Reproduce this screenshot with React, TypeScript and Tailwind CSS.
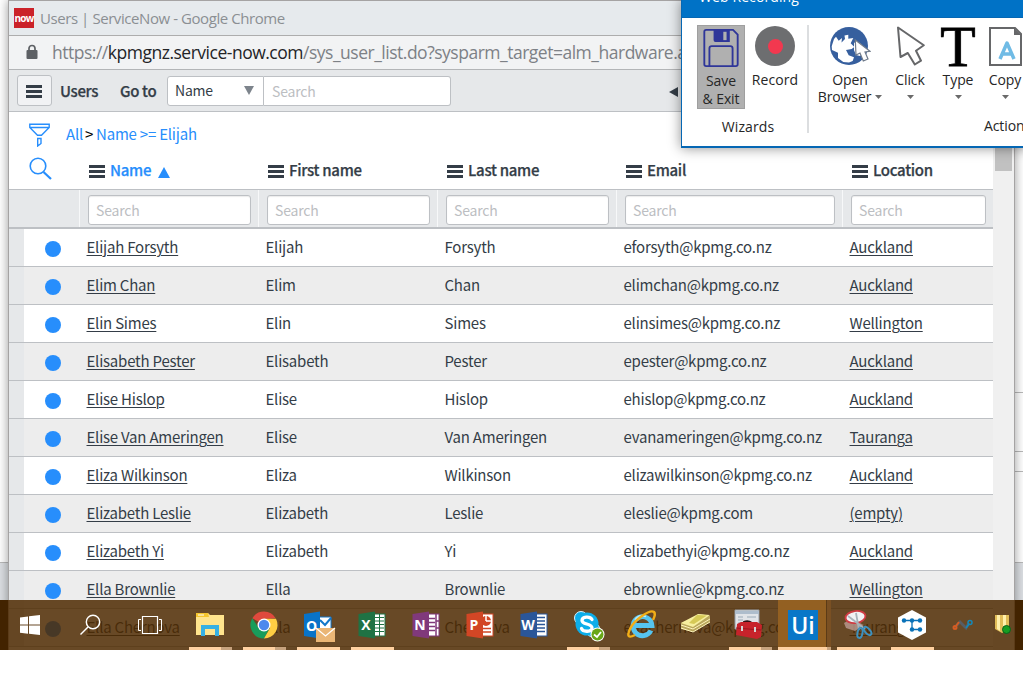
import React from "react";

const users = [
  ["Elijah Forsyth", "Elijah", "Forsyth", "eforsyth@kpmg.co.nz", "Auckland"],
  ["Elim Chan", "Elim", "Chan", "elimchan@kpmg.co.nz", "Auckland"],
  ["Elin Simes", "Elin", "Simes", "elinsimes@kpmg.co.nz", "Wellington"],
  ["Elisabeth Pester", "Elisabeth", "Pester", "epester@kpmg.co.nz", "Auckland"],
  ["Elise Hislop", "Elise", "Hislop", "ehislop@kpmg.co.nz", "Auckland"],
  ["Elise Van Ameringen", "Elise", "Van Ameringen", "evanameringen@kpmg.co.nz", "Tauranga"],
  ["Eliza Wilkinson", "Eliza", "Wilkinson", "elizawilkinson@kpmg.co.nz", "Auckland"],
  ["Elizabeth Leslie", "Elizabeth", "Leslie", "eleslie@kpmg.com", "(empty)"],
  ["Elizabeth Yi", "Elizabeth", "Yi", "elizabethyi@kpmg.co.nz", "Auckland"],
  ["Ella Brownlie", "Ella", "Brownlie", "ebrownlie@kpmg.co.nz", "Wellington"],
  ["Ella Chernova", "Ella", "Chernova", "ellachernova@kpmg.co.nz", "Tauranga"],
];

const columns = ["Name", "First name", "Last name", "Email", "Location"];
const gridCols = "grid grid-cols-[70px_179px_179px_179px_226px_151px]";
const sourceFont = "font-['Noto_Sans_CJK_SC',sans-serif]";
const segoeFont = "font-['Open_Sans',sans-serif]";
const strong = "font-medium [-webkit-text-stroke:0.25px_currentColor]";

function Bars() {
  return (
    <span className="flex w-4 shrink-0 flex-col gap-[2px]">
      <span className="h-[3px] bg-[#343d47]" />
      <span className="h-[3px] bg-[#343d47]" />
      <span className="h-[3px] bg-[#343d47]" />
    </span>
  );
}

function SearchBox() {
  return (
    <div className="h-[30px] rounded-[3px] border border-[#bdc0c4] bg-white pl-[7px] text-[14px] leading-[29px] tracking-[-0.2px] text-[#bcbec2] shadow-[inset_0_1px_1px_rgba(0,0,0,0.08)]">
      Search
    </div>
  );
}

function BrowserWindow() {
  return (
    <div className={`absolute left-2 top-0 flex h-[650px] w-[1007px] flex-col border-x border-t border-[#a5a3a3] bg-white shadow-[0_0_10px_rgba(0,0,0,0.4)] ${sourceFont}`}>
      <div className={`flex h-[35px] shrink-0 items-center border-b border-[#adadad] bg-[#e6eaed] pl-[5px] ${segoeFont}`}>
        <span className="flex h-5 w-5 items-center justify-center bg-[#cb2229] text-[10px] leading-none font-bold tracking-[-0.7px] text-white">now</span>
        <span className="ml-[6px] text-[15px] tracking-[-0.43px] text-[#8b8f93] whitespace-nowrap">Users | ServiceNow - Google Chrome</span>
      </div>
      <div className={`flex h-[34px] shrink-0 items-center overflow-hidden border-b border-[#b3b5b7] bg-[#f2f3f4] pl-[17px] ${segoeFont}`}>
        <svg width="12" height="16" viewBox="0 0 12 16" className="mb-[2px] shrink-0">
          <rect x="0.5" y="6" width="11" height="9" rx="1" fill="#5d6064" />
          <path d="M3 7V4.5a3 3 0 0 1 6 0V7" fill="none" stroke="#5d6064" strokeWidth="1.7" />
        </svg>
        <span className="ml-[14px] text-[17.5px] tracking-[-0.49px] text-[#7d8186] whitespace-nowrap">
          https://<span className="text-[#232427]">kpmgnz.service-now.com</span>/sys_user_list.do?sysparm_target=alm_hardware.a
        </span>
      </div>
      <div className="flex h-[42px] shrink-0 items-center border-b border-[#bdc0c4] bg-[#e6e8ea] pl-2 text-[#343d47]">
        <span className="flex h-[31px] w-[35px] items-center justify-center rounded-[3px] border border-[#bdc0c4] bg-[#f1f2f4] pt-[2px] pr-[2px]">
          <Bars />
        </span>
        <span className={`ml-2 w-[60px] text-[15px] leading-5 tracking-[-0.35px] ${strong}`}>Users</span>
        <span className={`w-[47px] text-[15px] leading-5 tracking-[-0.35px] whitespace-nowrap ${strong}`}>Go to</span>
        <span className="flex h-[30px] w-[97px] items-center justify-between rounded-l-[3px] border border-[#bdc0c4] bg-white pr-[9px] pl-[7px] text-[14px] tracking-[-0.2px]">
          Name
          <svg width="10" height="9" viewBox="0 0 10 9"><path d="M0 0H10L5 9z" fill="#7d848c" /></svg>
        </span>
        <span className="h-[30px] w-[187px] rounded-r-[3px] border border-l-0 border-[#bdc0c4] bg-white pl-2 text-[14px] leading-[28px] tracking-[-0.2px] text-[#bcbec2]">Search</span>
        <svg width="9" height="10" viewBox="0 0 9 10" className="mt-[2px] ml-[218px]"><path d="M9 0V10L0 5z" fill="#343d47" /></svg>
      </div>
      <div className="flex min-h-0 flex-1">
        <div className="w-[984px] shrink-0 overflow-hidden">
          <div className="flex h-[45px] items-center pl-5 text-[15px] tracking-[-0.22px] text-[#278efc]">
            <svg width="22" height="24" viewBox="0 0 22 24" fill="none" stroke="#278efc" strokeWidth="1.4">
              <path d="M.8 1.2H20.2V4.5L12.5 12.3H8.5L.8 4.5zM.8 4.5H20.2M8.7 15.5H12V20.5L8.7 23z" />
            </svg>
            <span className="mb-[2px] ml-[15px] leading-6 whitespace-nowrap">All<span className="mr-[3px] ml-[2px] text-black">&gt;</span>Name &gt;= Elijah</span>
          </div>
          <div className={`h-[33px] border-b border-[#bdc0c4] text-[15px] tracking-[-0.3px] ${gridCols}`}>
            <div className="pl-5">
              <svg width="24" height="24" viewBox="0 0 24 24" fill="none" stroke="#278efc">
                <circle cx="9" cy="9" r="7.8" strokeWidth="1.6" />
                <path d="M14.5 15L22 22" strokeWidth="2.2" />
              </svg>
            </div>
            {columns.map((name, i) => (
              <div key={name} className={`flex h-7 items-center gap-[5px] pl-[10px] whitespace-nowrap text-[#343d47] ${strong}`}>
                <Bars />
                <span className={i === 0 ? "mb-[2px] leading-6 text-[#278efc]" : "mb-[2px] leading-6"}>{name}</span>
                {i === 0 && <svg width="12" height="11" viewBox="0 0 12 11" className="mt-[2px] ml-[2px]"><path d="M0 11L6 0L12 11z" fill="#278efc" /></svg>}
              </div>
            ))}
          </div>
          <div className={`h-[39px] border-b-2 border-[#bdc0c4] bg-[#e6e8ea] ${gridCols}`}>
            <div />
            {columns.map((name) => (
              <div key={name} className="border-l border-[#f7f8f9] pt-[5px] pr-[7px] pl-2">
                <SearchBox />
              </div>
            ))}
          </div>
          {users.map((user, row) => (
            <div key={user[0]} className={`h-[38px] border-b border-[#bdc0c4] text-[15px] leading-[36px] tracking-[-0.22px] whitespace-nowrap text-[#343d47] ${row % 2 ? "bg-[#ededed]" : "bg-white"} ${gridCols}`}>
              <div className="flex items-center">
                <span className="h-full w-[15px] bg-[#e6e8ea]" />
                <span className="mt-[3px] ml-[21px] h-4 w-4 rounded-full bg-[#278efc]" />
              </div>
              {user.map((value, i) => (
                <div key={i} className="pl-[7.5px]">
                  <span className={i === 0 || i === 4 ? "underline decoration-1 underline-offset-2" : ""}>{value}</span>
                </div>
              ))}
            </div>
          ))}
        </div>
        <div className="flex-1 bg-[#f0f0f0] px-[2px]">
          <div className="h-[59px] bg-[#c1c1c1]" />
        </div>
      </div>
    </div>
  );
}

function Caret() {
  return <svg width="7" height="4" viewBox="0 0 7 4" className="shrink-0"><path d="M0 0H7L3.5 4z" fill="#6a6a6a" /></svg>;
}

function Tool({ label, width, children }: { label: string; width: string; children: React.ReactNode }) {
  return (
    <div className={`flex shrink-0 flex-col items-center ${width}`}>
      {children}
      <span className="mt-[2px] leading-[17px]">{label}</span>
      <span className="flex h-[17px] items-center"><Caret /></span>
    </div>
  );
}

function RecordingRibbon() {
  return (
    <div className={`absolute top-0 left-[681px] h-[148px] w-[350px] overflow-hidden border-b-2 border-l border-[#0567b4] bg-white text-[14px] tracking-[-0.1px] whitespace-nowrap text-[#262626] shadow-[0_0_12px_rgba(0,0,0,0.45)] ${segoeFont}`}>
      <div className="flex h-[18px] border-b border-[#0567b4] bg-[#0072c6] pl-[17px] text-white">
        <span className="-mt-[13px] block h-5 leading-5 tracking-[0.1px]">Web Recording</span>
      </div>
      <div className="flex h-[115px] pt-[7px] pl-[15px]">
        <div className="flex w-[110px] shrink-0 flex-col">
          <div className="flex">
            <div className="flex h-[84px] w-12 flex-col items-center border border-[#9f9f9f] bg-[#b0b0b0] pt-[3px]">
              <svg width="38" height="41" viewBox="0 0 38 41" fill="none" stroke="#2f3699" strokeWidth="2">
                <path d="M3 1H32L37 6V38Q37 40 35 40H3Q1 40 1 38V3Q1 1 3 1z" />
                <path d="M6.5 40V21Q6.500 18.500 9 18.500H29Q31.500 18.500 31.500 21V40" />
                <path d="M11 1H28.500V14H13Q11 14 11 12z" fill="#2f3699" stroke="none" />
                <path d="M21.500 3H25V12H21.500z" fill="#b0b0b0" stroke="none" />
              </svg>
              <span className="mt-[5px] leading-[18px]">Save</span>
              <span className="leading-[18px]">&amp; Exit</span>
            </div>
            <div className="flex w-[60px] flex-col items-center pt-[1px]">
              <span className="flex h-10 w-10 items-center justify-center rounded-full bg-[#6d6e70]"><span className="h-[15px] w-[15px] rounded-full bg-[#f2384f]" /></span>
              <span className="mt-[5px] leading-[18px] tracking-[0.1px]">Record</span>
            </div>
          </div>
          <span className="mt-[9px] w-[102px] text-center leading-[18px] tracking-[0.1px]">Wizards</span>
        </div>
        <div className="h-[108px] w-[2px] shrink-0 bg-[#dcdee0]" />
        <div className="ml-2 flex w-[250px] shrink-0 flex-col">
          <div className="flex h-[84px]">
            <div className="flex w-[66px] shrink-0 flex-col items-center">
              <svg width="42" height="44" viewBox="0 0 42 44">
                <circle cx="20" cy="21" r="19" fill="#365f9e" />
                <path d="M2.700 21.300L5 14L7 11.700L9.700 15.700L13 13L12.500 17.500L16 14L15.500 10.500L19.300 9.700V13.700L24.300 13L21.700 18.300L25.300 22L22.700 24L17 25L19.700 30.300L25 32.300L23.700 36L20 37.500L14.300 37L9 33V27.700L3 25z" fill="#fff" />
                <path d="M25 18L28 16L33 20L34 28L31 31L27 30L25 25z" fill="#fff" />
                <path d="M26.300 15L27 30L31 28L34.300 36L39 34L36 27L41 26.300z" fill="#fff" stroke="#707b8a" strokeWidth="1.2" />
              </svg>
              <span className="mt-[2px] leading-[17px]">Open</span>
              <span className="flex items-center gap-1 leading-[17px]">Browser <Caret /></span>
            </div>
            <Tool label="Click" width="w-[54px]">
              <svg width="30" height="44" viewBox="0 0 30 44" fill="#fff" stroke="#666769" strokeWidth="2" strokeLinejoin="round">
                <path d="M3 2.500L5.500 32L12.800 28L19.800 39.500L26 35.700L21 25.700L28.800 20.300z" />
              </svg>
            </Tool>
            <Tool label="Type" width="w-[42px]">
              <svg width="38" height="44" viewBox="0 0 38 44">
                <text x="19" y="41" textAnchor="middle" fontFamily="Liberation Serif" fontSize="58" stroke="#000" strokeWidth="0.8">T</text>
              </svg>
            </Tool>
            <Tool label="Copy" width="w-[52px]">
              <svg width="34" height="44" viewBox="0 0 34 44">
                <path d="M2 3H27L33 9V40H2z" fill="#fff" stroke="#666769" strokeWidth="2" />
                <path d="M26 3V10H33z" fill="#666769" />
                <path d="M12 34L19 18L26 34M14.500 29H23.500" fill="none" stroke="#70bbe5" strokeWidth="3.500" strokeLinejoin="round" />
              </svg>
            </Tool>
          </div>
          <span className="mt-[9px] ml-[167px] shrink-0 pt-[3px] leading-[18px]">Actions</span>
        </div>
      </div>
    </div>
  );
}

function OfficeIcon({ letter, dark, children }: { letter: string; dark: string; children: React.ReactNode }) {
  return (
    <svg width="54" height="50" viewBox="0 0 54 50">
      <rect x="26" y="14" width="14" height="22" fill="#fff" stroke={dark} />
      {children}
      <path d="M13.500 14L30 11.500V38.500L13.500 36z" fill={dark} />
      <text x="21" y="30" textAnchor="middle" fontFamily="Open Sans" fontWeight="700" fontSize="14" fill="#fff">{letter}</text>
    </svg>
  );
}

function Slot({ state = "none", children }: { state?: "none" | "open" | "multi" | "active"; children: React.ReactNode }) {
  return (
    <div className={`flex h-[50px] w-[54px] shrink-0 flex-col ${state === "active" ? "bg-[linear-gradient(90deg,transparent_1px,#936022_1px,#936022_49px,#5c3b16_49px,#5c3b16_50px,#7a5023_50px)]" : ""}`}>
      <div className="h-[47px] overflow-hidden">{children}</div>
      <div className={`flex ${state === "active" ? "pl-[1px]" : "pl-[6px]"}`}>
        {state === "open" && <span className="h-[3px] w-[43px] bg-[#ffd1a1]" />}
        {state === "active" && <><span className="h-[3px] w-[49px] bg-[#ffd1a1]" /><span className="h-[3px] w-1 bg-[#c7a37e]" /></>}
        {state === "multi" && <><span className="h-[3px] w-8 bg-[#ffd1a1]" /><span className="h-[3px] w-[11px] bg-[#c7a37e]" /></>}
      </div>
    </div>
  );
}

function Taskbar() {
  return (
    <div className="absolute top-[600px] left-0 flex h-[50px] w-[1023px] overflow-hidden bg-[rgba(78,41,0,0.85)]">
      <svg width="60" height="50" viewBox="0 0 60 50" className="shrink-0">
        <path d="M20 17.500L28 16.400V24.500H20zM29 16.200L40 15V24.500H29zM20 25.500H28V33.700L20 32.700zM29 25.500H40V35L29 33.800z" fill="#fff" />
      </svg>
      <svg width="60" height="50" viewBox="0 0 60 50" fill="none" stroke="#fff" strokeWidth="1.400" className="shrink-0">
        <circle cx="33" cy="22" r="6.700" /><path d="M28 27L20.500 34.500" />
      </svg>
      <svg width="63" height="50" viewBox="0 0 63 50" fill="none" stroke="#fff" className="shrink-0">
        <path d="M22.500 16.500H37.500V33.500H22.500z" strokeWidth="1.200" /><path d="M21 19.500H18.500V30.500H21M39 19.500H41.500V30.500H39" />
      </svg>
      <Slot state="multi">
        <svg width="54" height="50" viewBox="0 0 54 50">
          <path d="M13 13H25L27 15H41V35H13z" fill="#ffe48d" />
          <path d="M13 13H25L26 17H13z" fill="#f6c52d" /><path d="M15 15H21" stroke="#fff" />
          <path d="M18 36V25H36V36H32V29H22V36z" fill="#36b0e4" />
        </svg>
      </Slot>
      <Slot state="multi">
        <svg width="54" height="50" viewBox="0 0 54 50">
          <path d="M27 25L15.300 18.200A13.500 13.500 0 0 1 38.700 18.200L27 19z" fill="#df493d" />
          <path d="M15.300 18.200A13.500 13.500 0 0 0 27 38.500L32.500 28.500L27 25L21 27z" fill="#199c5b" />
          <path d="M27 18.700H39A13.500 13.500 0 0 1 27 38.500L33 28z" fill="#ffce43" />
          <circle cx="27" cy="25" r="6.500" fill="#fff" /><circle cx="27" cy="25" r="5.200" fill="#4c89ed" />
        </svg>
      </Slot>
      <Slot state="open">
        <svg width="54" height="50" viewBox="0 0 54 50">
          <path d="M28 17H40V33H28z" fill="#fff" stroke="#1277c9" /><path d="M29 20L34 25L40 18" fill="none" stroke="#1277c9" strokeWidth="2" />
          <path d="M13 14L29 11.500V38.500L13 36z" fill="#0873c8" />
          <text x="20.500" y="30.500" textAnchor="middle" fontFamily="Open Sans" fontWeight="700" fontSize="14" fill="#fff">O</text>
          <path d="M25 28H44V42H25z" fill="#eab676" /><path d="M25 28L34.500 36L44 28" fill="none" stroke="#fff" strokeWidth="1.200" />
        </svg>
      </Slot>
      <Slot state="open">
        <OfficeIcon letter="X" dark="#1f7244"><path d="M30 17.500H39M30 21H39M30 24.500H39M30 28H39M30 31.500H39M34.500 14V36" stroke="#1f7244" /></OfficeIcon>
      </Slot>
      <Slot>
        <OfficeIcon letter="N" dark="#80397b"><path d="M29 18.500H36M29 22.500H36M29 26.500H36M29 30.500H36M37 14V36M37 21H40M37 28H40" stroke="#80397b" strokeWidth="1.500" /></OfficeIcon>
      </Slot>
      <Slot>
        <OfficeIcon letter="P" dark="#d24625"><circle cx="33" cy="21" r="5" fill="#d24625" /><path d="M33 21V15M33 21H39" stroke="#fff" strokeWidth="1.500" /><path d="M30 28.500H38M30 32H38" stroke="#d24625" strokeWidth="1.500" /></OfficeIcon>
      </Slot>
      <Slot>
        <OfficeIcon letter="W" dark="#2a5699"><path d="M30 17.500H38M30 21H38M30 24.500H38M30 28H38M30 31.500H38" stroke="#2a5699" strokeWidth="1.400" /></OfficeIcon>
      </Slot>
      <Slot state="multi">
        <svg width="54" height="50" viewBox="0 0 54 50">
          <g fill="#0caeea" stroke="#d9f3ff" strokeWidth="1"><circle cx="20" cy="18" r="6.500" /><circle cx="32" cy="30" r="7" /></g>
          <circle cx="26" cy="24" r="11.500" fill="#0caeea" />
          <path d="M31 19.500C29 16 21 16.500 21 20.500C21 25 31 23 31 28C31 32 22 32.500 20.500 28.500" fill="none" stroke="#fff" strokeWidth="3.300" strokeLinecap="round" />
          <circle cx="36.500" cy="34.500" r="7" fill="#fff" /><circle cx="36.500" cy="34.500" r="6" fill="#68a617" />
          <path d="M33 34.500L36 37L40 32" fill="none" stroke="#fff" strokeWidth="1.800" />
        </svg>
      </Slot>
      <Slot>
        <svg width="54" height="50" viewBox="0 0 54 50">
          <path d="M36 30.500A9.500 9.500 0 1 1 37 25.500H20" fill="none" stroke="#56c4ef" strokeWidth="4.800" />
          <path d="M20 20Q24 14 31 16.500" fill="none" stroke="#b2ebff" strokeWidth="1.800" />
          <path d="M20 35Q10 40 15 29C19 20 35 9 39 12Q41 14 38 20" fill="none" stroke="#f2ae18" strokeWidth="2.500" />
        </svg>
      </Slot>
      <Slot>
        <svg width="54" height="50" viewBox="0 0 54 50">
          <path d="M12 23L31 14L41 16V22L24 32L12 29z" fill="#b9a75c" />
          <path d="M12 23L29 14L41 15L24 27z" fill="#f7ef9f" /><path d="M12 25L24 29L41 19M12 28L24 32L41 22" fill="none" stroke="#fff4bd" />
          <path d="M20 23L28 15L38 15.500L25 24z" fill="#d6c956" />
        </svg>
      </Slot>
      <Slot state="multi">
        <svg width="54" height="50" viewBox="0 0 54 50">
          <path d="M12 10H36V29H12z" fill="#e1e4e8" stroke="#929ba4" /><path d="M12 11H36V14H12z" fill="#aebdcc" /><path d="M15 17H20M15 20H20M15 23H20M24 17H33" stroke="#9aaab7" />
          <path d="M21 25V22Q25 20 29 23V26" fill="none" stroke="#301618" strokeWidth="2" />
          <path d="M14 24L18 22H34L39 25L38 37L34 39L13 35z" fill="#c7232b" /><path d="M13 28L38 30" stroke="#9b1820" /><path d="M19 26V31M32 27V32" stroke="#d5d5d5" strokeWidth="2" />
        </svg>
      </Slot>
      <Slot state="active">
        <svg width="54" height="50" viewBox="0 0 54 50">
          <rect x="11" y="10" width="30" height="30" fill="#0877c8" />
          <text x="26" y="34" textAnchor="middle" fontFamily="Open Sans" fontWeight="600" fontSize="23" fill="#fff">Ui</text>
        </svg>
      </Slot>
      <Slot state="open">
        <svg width="54" height="50" viewBox="0 0 54 50">
          <path d="M13 23L20 19L33 25L24 31L15 28z" fill="#c1a19b" opacity="0.75" />
          <ellipse cx="24.500" cy="17" rx="10" ry="6" fill="#f2f2f4" stroke="#cf3b43" strokeWidth="1.800" transform="rotate(-8 24.500 17)" />
          <path d="M17 16L34 29M25 13L28 30" stroke="#a9b3ba" strokeWidth="1.800" />
          <g fill="none" stroke="#3d91be" strokeWidth="2"><ellipse cx="29" cy="33" rx="2.500" ry="5" transform="rotate(12 29 33)" /><ellipse cx="36.500" cy="31" rx="2.500" ry="5" transform="rotate(-42 36.500 31)" /></g>
        </svg>
      </Slot>
      <Slot state="open">
        <svg width="54" height="50" viewBox="0 0 54 50">
          <path d="M27 10L41 17.500V32.500L27 40L13 32.500V17.500z" fill="#fff" />
          <path d="M19 20.500H35M27 20.500V29.500H35" fill="none" stroke="#0871b8" strokeWidth="1.300" />
          <g fill="#0871b8"><circle cx="19" cy="20.500" r="2.200" /><circle cx="27" cy="20.500" r="2.200" /><circle cx="35" cy="20.500" r="2.200" /><circle cx="27" cy="29.500" r="2.200" /><circle cx="35" cy="29.500" r="2.200" /></g>
        </svg>
      </Slot>
      <Slot>
        <svg width="54" height="50" viewBox="0 0 54 50" fill="none">
          <path d="M15 28L21 22L27 28L30 23" stroke="#575d64" strokeWidth="2.800" /><circle cx="16" cy="27.500" r="1.500" stroke="#d55c22" strokeWidth="2" /><path d="M17 26L20 22" stroke="#d55c22" strokeWidth="2" /><circle cx="31" cy="22.500" r="2" stroke="#1489b9" strokeWidth="1.500" /><path d="M27 28L30 24" stroke="#1489b9" strokeWidth="1.500" />
        </svg>
      </Slot>
      <svg width="30" height="50" viewBox="0 0 30 50" className="shrink-0">
        <path d="M2 15H16V30L9 33L2 29z" fill="#e1bd58" /><path d="M4 15H7V31L4 29zM10 15H13V30H10z" fill="#fff0ab" />
        <circle cx="13.500" cy="29.500" r="4" fill="#169d23" stroke="#0b611a" />
      </svg>
    </div>
  );
}

export default function App() {
  return (
    <div className="relative h-[694px] w-[1023px] overflow-hidden bg-white">
      <div className="flex h-[600px] flex-col bg-white">
        <div className="ml-2 h-[393px] border-b border-[#b9b9b9]" />
        <div className="ml-2 h-[59px] border-b border-[#b9b9b9]" />
        <div className="ml-2 h-5 border-b border-[#b9b9b9]" />
        <div className="h-[91px] border-b border-[#b9b9b9]" />
        <div className="flex-1 bg-[#dcdfe3]" />
      </div>
      <div className="h-[50px] bg-black" />
      <div className="absolute top-0 left-0 h-[650px] w-[1023px] overflow-hidden">
        <BrowserWindow />
      </div>
      <RecordingRibbon />
      <Taskbar />
    </div>
  );
}
